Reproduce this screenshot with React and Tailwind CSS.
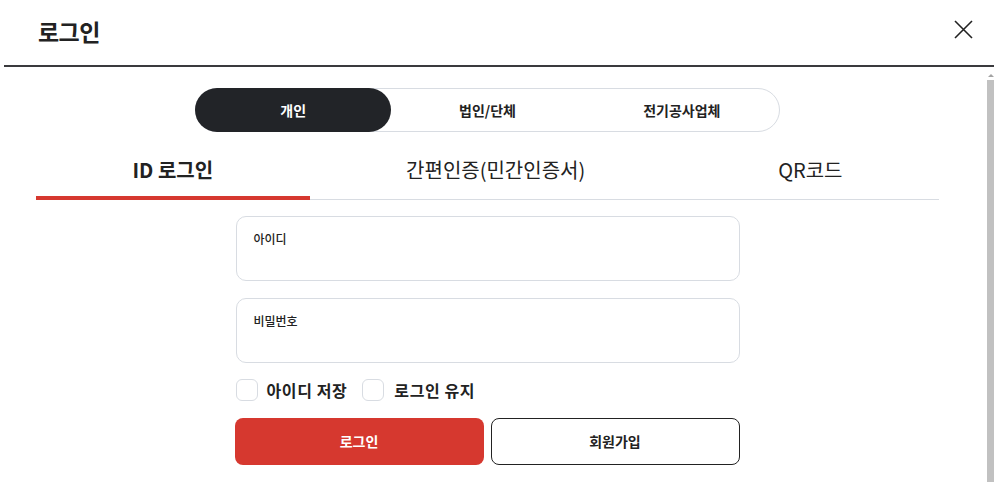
import React, { useState } from 'react';

const KR = { fontFamily: '"Noto Sans CJK KR", "Noto Sans", sans-serif' };

export default function App() {
  const [member, setMember] = useState('personal');
  const [tab, setTab] = useState('id');

  const members = [
    { key: 'personal', label: '개인' },
    { key: 'corp', label: '법인/단체' },
    { key: 'electric', label: '전기공사업체' },
  ];

  const tabs = [
    { key: 'id', label: 'ID 로그인' },
    { key: 'cert', label: '간편인증(민간인증서)' },
    { key: 'qr', label: 'QR코드' },
  ];

  return (
    <div className="w-[1000px] h-[482px] overflow-hidden bg-white text-[#222]" style={KR}>
      <div className="ml-[4px] w-[990px] h-full flex flex-col">
        {/* Header */}
        <div className="h-[67px] shrink-0 flex items-center justify-between pl-[34px] pr-[21px] border-b-2 border-[#3a3a3d]">
          <h1 className="text-[23px] font-bold leading-none tracking-tight -mt-[2px]">로그인</h1>
          <button className="w-[20px] h-[20px] flex items-center justify-center -mt-[7px]">
            <svg width="19" height="19" viewBox="0 0 19 19" fill="none" stroke="#222" strokeWidth="1.6">
              <path d="M1 1 L18 18 M18 1 L1 18" />
            </svg>
          </button>
        </div>

        {/* Body */}
        <div className="flex-1 flex min-h-0">
          <div className="flex-1 pl-[32px] pr-[16px]">
            <div className="w-[903px] flex flex-col items-center">
              {/* Member type switch */}
              <div className="mt-[21px] w-[585px] h-[44px] grid grid-cols-3 rounded-full border border-[#d8dce2]">
                {members.map((m) => (
                  <button
                    key={m.key}
                    onClick={() => setMember(m.key)}
                    className={`-m-px h-[44px] rounded-full text-[14px] font-bold ${
                      member === m.key ? 'bg-[#222428] text-white' : 'text-[#222]'
                    }`}
                  >
                    {m.label}
                  </button>
                ))}
              </div>

              {/* Tabs */}
              <div className="mt-[16px] w-full flex border-b border-[#d8dce2]">
                {tabs.map((t) => (
                  <button
                    key={t.key}
                    onClick={() => setTab(t.key)}
                    className={`flex-auto h-[52px] flex items-center justify-center text-[20px] -mb-px border-b-4 pb-[4px] ${
                      tab === t.key ? 'font-bold border-[#d6382f]' : 'font-normal border-transparent'
                    }`}
                  >
                    {t.label}
                  </button>
                ))}
              </div>

              {/* Form */}
              <div className="mt-[16px] w-[504px] flex flex-col">
                <label className="h-[65px] rounded-[10px] border border-[#d8dce2] px-[17px] pt-[8px] block">
                  <span className="text-[12px] font-medium text-[#222]">아이디</span>
                </label>
                <label className="mt-[17px] h-[65px] rounded-[10px] border border-[#d8dce2] px-[17px] pt-[8px] block">
                  <span className="text-[12px] font-medium text-[#222]">비밀번호</span>
                </label>

                <div className="mt-[15px] flex items-center">
                  <label className="flex items-center">
                    <span className="w-[22px] h-[22px] rounded-[6px] border-[1.5px] border-[#d8dce2]" />
                    <span className="ml-[9px] text-[16px] font-semibold tracking-[0.6px]">아이디 저장</span>
                  </label>
                  <label className="flex items-center ml-[15px]">
                    <span className="w-[22px] h-[22px] rounded-[6px] border-[1.5px] border-[#d8dce2]" />
                    <span className="ml-[10px] text-[16px] font-semibold tracking-[0.6px]">로그인 유지</span>
                  </label>
                </div>

                <div className="mt-[16px] flex gap-[7px] -ml-px">
                  <button className="w-[249px] h-[47px] rounded-[8px] bg-[#d6382f] text-white text-[14px] font-bold">
                    로그인
                  </button>
                  <button className="w-[249px] h-[47px] rounded-[8px] border-[1.5px] border-[#222] text-[14px] font-bold">
                    회원가입
                  </button>
                </div>
              </div>
            </div>
          </div>

          {/* Scrollbar */}
          <div className="w-[7px] shrink-0 mt-[3px] flex flex-col items-center">
            <div className="h-[10px] w-full flex items-center justify-center">
              <div className="w-0 h-0 border-l-[3px] border-r-[3px] border-b-[3px] border-l-transparent border-r-transparent border-b-[#a3a3a3]" />
            </div>
            <div className="flex-1 w-full bg-[#c1c1c1]" />
          </div>
        </div>
      </div>
    </div>
  );
}
